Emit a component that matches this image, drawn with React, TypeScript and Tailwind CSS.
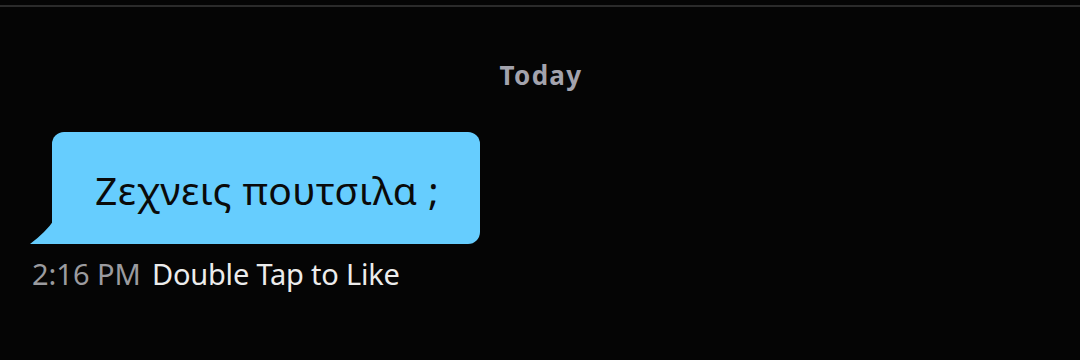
import React from "react";

export default function App() {
  return (
    <div
      className="w-[1080px] h-[360px] bg-[#050505] overflow-hidden pt-[5px]"
      style={{ fontFamily: '"Noto Sans", "Open Sans", sans-serif' }}
    >
      <div className="h-[2px] bg-[#2b2b2b]" />

      {/* Day separator */}
      <div className="mt-[52px] flex justify-center">
        <span className="text-[26px] leading-[32px] font-bold tracking-[1.3px] text-[#a3a3ad] pl-[2px]">Today</span>
      </div>

      {/* Incoming message */}
      <div className="mt-[41px] pl-[30px]">
        <div className="relative inline-flex ml-[22px]">
          <svg
            className="absolute left-[-22px] bottom-0"
            width="24"
            height="24"
            viewBox="0 0 24 24"
          >
            <path d="M24 0 L24 24 L0 24 Q16 12 24 0 Z" fill="#66cdfe" />
          </svg>
          <div className="w-[428px] h-[112px] rounded-[12px] rounded-bl-none bg-[#66cdfe] flex items-center pl-[43px] pt-[3px]">
            <span className="text-[39px] leading-none tracking-[0.5px] text-[#0a0a0a]">Ζεχνεις πουτσιλα ;</span>
          </div>
        </div>

        <div className="mt-[14px] flex items-baseline gap-[11px] pl-[2px] text-[29px] leading-[32px]">
          <span className="text-[#9b9b9f]">2:16 PM</span>
          <span className="text-[#ececec] tracking-[-0.2px]">Double Tap to Like</span>
        </div>
      </div>
    </div>
  );
}
